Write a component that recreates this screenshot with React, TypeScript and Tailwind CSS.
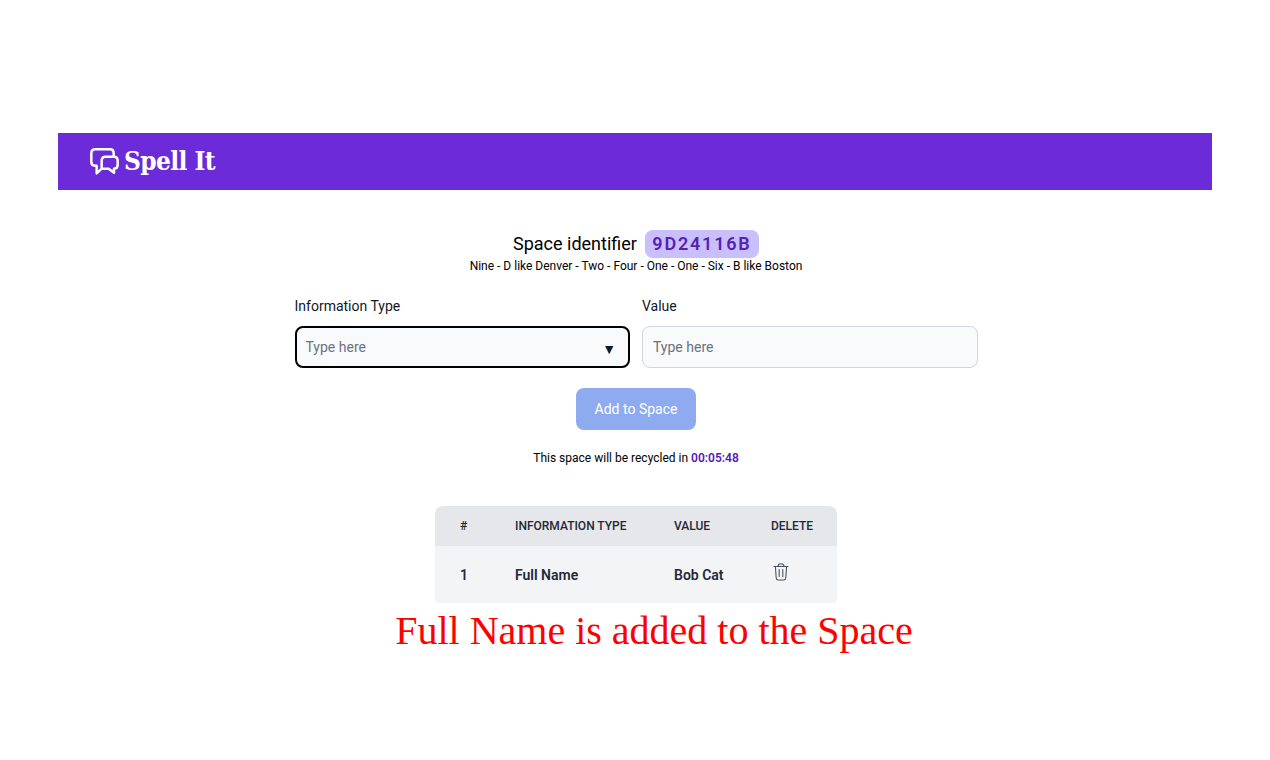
// Logo: two overlapping speech bubbles
function LogoIcon() {
  return (
    <svg width="29" height="27" viewBox="95 50 87 81" fill="none" stroke="currentColor" strokeWidth="7.5" strokeLinejoin="round" strokeLinecap="round">
      <path d="M130 112V88Q130 76 142 76H167Q178 76 178 88V101Q178 112 167 112V124L151 112H130L115 126V103H110Q99 103 99 92V66Q99 54 111 54H155Q166 54 166 66V76" />
    </svg>
  );
}

function TrashIcon() {
  return (
    <svg width="16" height="18" viewBox="0 0 16 18" fill="none" stroke="#4b5563" strokeWidth="1.1" strokeLinecap="round" strokeLinejoin="round">
      <path d="M1 3.5H15" />
      <path d="M5 3.5C5 1.8 6 0.8 8 0.8C10 0.8 11 1.8 11 3.5" />
      <path d="M2.4 3.5L3.2 15C3.3 16.2 4 17 5.2 17H10.8C12 17 12.7 16.2 12.8 15L13.6 3.5" />
      <path d="M6.2 6.5V13.5M9.8 6.5V13.5" />
    </svg>
  );
}

export default function App() {
  return (
    <div className="min-h-[760px] bg-white px-[58px] pt-[133px] font-['Roboto',sans-serif] text-black">
      <header className="flex h-[57px] items-center gap-[5px] bg-[#6c2bd9] pl-[32px] text-white">
        <LogoIcon />
        <span className="font-['DejaVu_Serif',serif] text-[26px] font-bold tracking-[-0.6px] [font-stretch:condensed]">Spell It</span>
      </header>

      <main className="flex flex-col items-center pl-[2px]">
        <div className="mt-[40px] flex h-[28px] items-center gap-2">
          <span className="text-lg">Space identifier</span>
          <span className="flex h-[28px] w-[114px] items-center justify-center rounded-lg bg-[#cabffd] text-lg font-semibold tracking-widest text-[#5521b5]">
            9D24116B
          </span>
        </div>
        <p className="text-xs leading-[16px]">Nine - D like Denver - Two - Four - One - One - Six - B like Boston</p>

        <div className="mt-[22px] grid w-[683px] grid-cols-2 gap-3">
          <div>
            <label className="block text-sm leading-[20px] text-[#111827]">Information Type</label>
            <div className="mt-[10px] flex h-[42px] items-center justify-between rounded-lg border-2 border-black bg-[#f9fafb] pl-[9px] pr-[12px]">
              <span className="text-sm text-[#6b7280]">Type here</span>
              <span className="mt-[4px] text-[14px] leading-none text-[#111827]">▼</span>
            </div>
          </div>
          <div>
            <label className="block text-sm leading-[20px] text-[#111827]">Value</label>
            <div className="mt-[10px] flex h-[42px] items-center rounded-lg border border-[#d1d5db] bg-[#f9fafb] pl-[10px]">
              <span className="text-sm text-[#6b7280]">Type here</span>
            </div>
          </div>
        </div>

        <button type="button" className="mt-[20px] h-[42px] w-[120px] rounded-lg bg-[#8fabef] text-sm text-white">
          Add to Space
        </button>

        <p className="mt-[20px] text-xs leading-[16px]">
          This space will be recycled in <span className="font-semibold text-[#5521b5]">00:05:48</span>
        </p>

        <table className="mt-[40px] w-[402px] table-fixed overflow-hidden rounded-t-lg rounded-b-sm text-left">
          <thead className="bg-[#e5e7eb] text-xs text-[#1f2937]">
            <tr className="h-[40px]">
              <th className="w-[80px] pl-[25px] font-medium">#</th>
              <th className="w-[159px] font-medium">INFORMATION TYPE</th>
              <th className="w-[97px] font-medium">VALUE</th>
              <th className="font-medium">DELETE</th>
            </tr>
          </thead>
          <tbody className="bg-[#f3f4f6] text-sm font-semibold text-[#1f2937]">
            <tr className="h-[57px]">
              <td className="pl-[25px]">1</td>
              <td>Full Name</td>
              <td>Bob Cat</td>
              <td className="pl-[2px]">
                <div className="-mt-[5px]"><TrashIcon /></div>
              </td>
            </tr>
          </tbody>
        </table>

        <p className="ml-[36px] mt-[3px] font-['Liberation_Serif',serif] text-[40px] leading-[50px] text-[#ff0000]">
          Full Name is added to the Space
        </p>
      </main>
    </div>
  );
}
